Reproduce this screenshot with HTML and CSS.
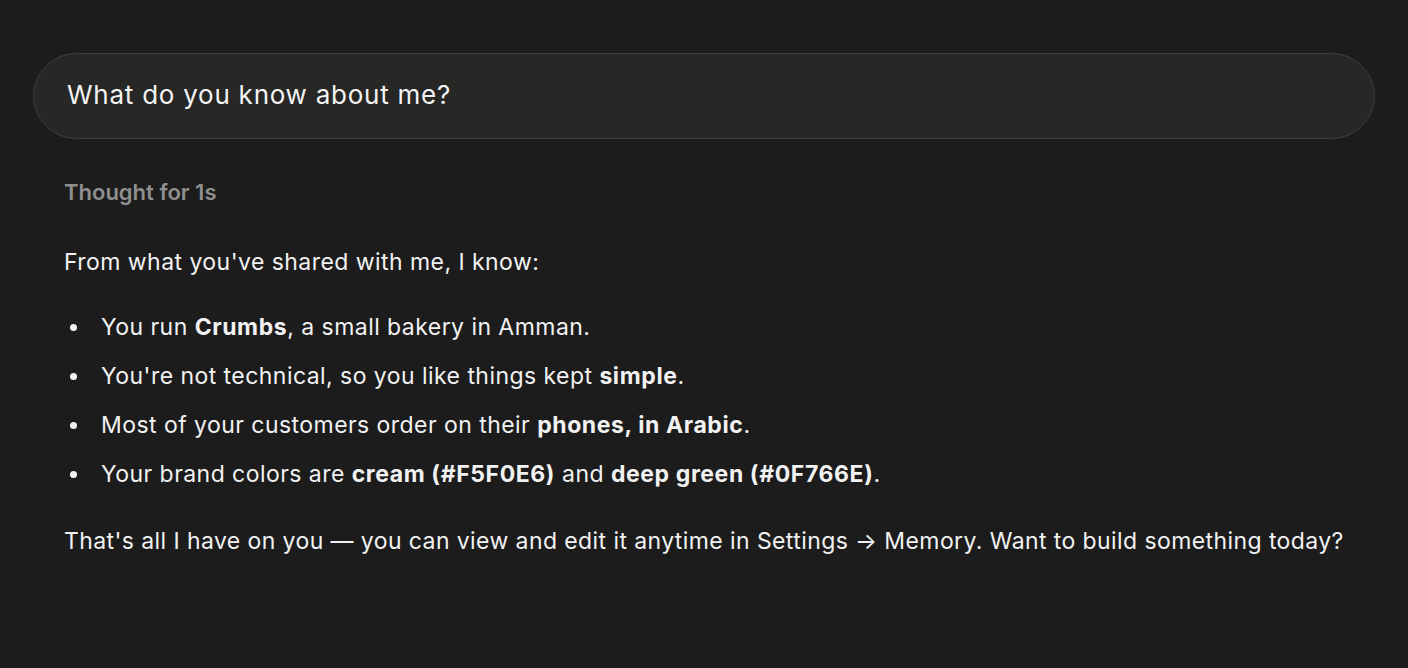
FILE: index.html
```html
<!DOCTYPE html>
<html lang="en">
<head>
    <meta charset="UTF-8">
    <title>Chat - Memory</title>
    <link rel="stylesheet" href="styles.css">
</head>
<body>
    <div class="chat">
        <!-- user message -->
        <div class="prompt">What do you know about me?</div>

        <!-- assistant reply -->
        <div class="reply">
            <div class="thought">Thought for 1s</div>
            <p class="lead">From what you've shared with me, I know:</p>
            <ul class="facts">
                <li>You run <b>Crumbs</b>, a small bakery in Amman.</li>
                <li>You're not technical, so you like things kept <b>simple</b>.</li>
                <li>Most of your customers order on their <b>phones, in Arabic</b>.</li>
                <li>Your brand colors are <b>cream (#F5F0E6)</b> and <b>deep green (#0F766E)</b>.</li>
            </ul>
            <p class="outro">That's all I have on you — you can view and edit it anytime in Settings → Memory. Want to build something today?</p>
        </div>
    </div>
</body>
</html>
```

FILE: styles.css
```css
* { margin: 0; padding: 0; box-sizing: border-box; }
body { background-color: #1c1c1c; color: #f2f2f2; font-family: Inter, "Noto Sans", sans-serif; height: 100vh; }
.chat { padding: 53px 33px 0 33px; }
.prompt { height: 86px; display: flex; align-items: center; padding: 0 33px 3px 33px; background-color: #272726; border: 1.5px solid #3c3c3a; border-radius: 43px; font-size: 26px; letter-spacing: 0.75px; color: #f4f4f4; }
.reply { padding-left: 31px; }
.thought { margin-top: 40px; font-size: 22px; font-weight: 600; color: #8f8f8f; letter-spacing: 0; }
.lead { margin-top: 42px; font-size: 23px; letter-spacing: 0.45px; line-height: 30px; }
.facts { list-style: none; margin-top: 35px; }
.facts li { position: relative; padding-left: 37px; font-size: 23px; line-height: 30px; letter-spacing: 0.45px; margin-bottom: 19px; }
.facts li::before { content: ""; position: absolute; left: 6px; top: 12px; width: 7px; height: 7px; border-radius: 50%; background-color: #f2f2f2; }
.facts b { font-weight: 700; letter-spacing: 0.6px; }
.outro { margin-top: 37px; font-size: 23px; line-height: 30px; letter-spacing: 0.41px; white-space: nowrap; }
```
